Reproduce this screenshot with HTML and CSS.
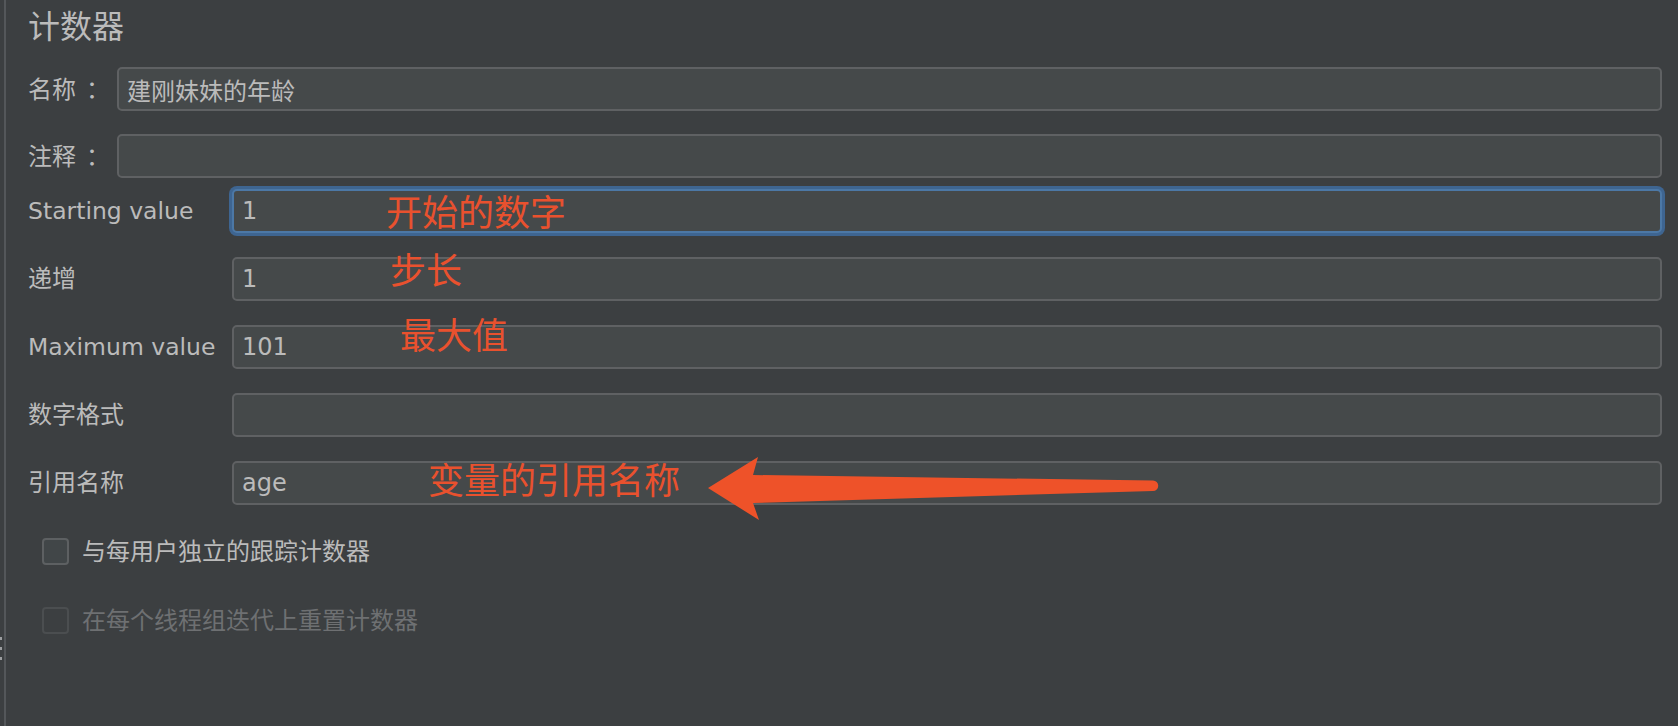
FILE: index.html
```html
<!DOCTYPE html>
<html lang="zh-CN">
<head>
<meta charset="utf-8">
<title>计数器</title>
<link rel="stylesheet" href="styles.css">
</head>
<body>
<div class="app">
  <div class="splitter">
    <span class="grip"></span>
    <span class="grip"></span>
    <span class="grip"></span>
  </div>
  <main class="panel">
    <h1 class="title">计数器</h1>

    <div class="form form-name">
      <label class="label">名称<span class="colon">：</span></label>
      <input class="field" type="text" value="建刚妹妹的年龄">
      <label class="label">注释<span class="colon">：</span></label>
      <input class="field" type="text" value="">
    </div>

    <div class="form form-counter">
      <label class="label latin">Starting value</label>
      <input class="field focused" type="text" value="1">
      <label class="label">递增</label>
      <input class="field" type="text" value="1">
      <label class="label latin">Maximum value</label>
      <input class="field" type="text" value="101">
      <label class="label">数字格式</label>
      <input class="field" type="text" value="">
      <label class="label">引用名称</label>
      <input class="field" type="text" value="age">
    </div>

    <div class="checks">
      <label class="check"><input class="box" type="checkbox"><span>与每用户独立的跟踪计数器</span></label>
      <label class="check disabled"><input class="box" type="checkbox" disabled><span>在每个线程组迭代上重置计数器</span></label>
    </div>
  </main>
</div>

<div class="annotations">
  <span class="note note-start">开始的数字</span>
  <span class="note note-step">步长</span>
  <span class="note note-max">最大值</span>
  <span class="note note-ref">变量的引用名称</span>
  <svg class="arrow" width="1678" height="726" viewBox="0 0 1678 726">
    <path d="M708 488 L758 457 L753 475 L1153 480.5 A5.25 5.25 0 0 1 1153 491 L753 503 L759 520 Z" fill="#ee5229"/>
  </svg>
</div>
</body>
</html>
```

FILE: styles.css
```css
html, body {
  margin: 0;
  padding: 0;
}

body {
  width: 1678px;
  height: 726px;
  overflow: hidden;
  background: #3c3f41;
  color: #bbbbbb;
  font-family: "DejaVu Sans", "Noto Sans CJK SC", sans-serif;
  font-size: 24px;
  position: relative;
}

.app {
  display: flex;
  height: 726px;
}

.splitter {
  width: 6px;
  flex: none;
  border-right: 2px solid #54575a;
  display: flex;
  flex-direction: column;
  gap: 7px;
  padding-top: 637px;
  box-sizing: border-box;
}

.grip {
  display: block;
  width: 2px;
  height: 3px;
  background: #9c9ea0;
}

.panel {
  flex: 1;
  padding: 7px 16px 0 22px;
  display: flex;
  flex-direction: column;
}

.title {
  margin: 0;
  font-size: 32px;
  line-height: 40px;
  font-weight: normal;
  color: #bbbbbb;
}

.form {
  display: grid;
  align-items: center;
}

.form-name {
  grid-template-columns: 89px 1fr;
  row-gap: 23px;
  margin-top: 20px;
}

.form-counter {
  grid-template-columns: 204px 1fr;
  row-gap: 24px;
  margin-top: 11px;
}

.label {
  line-height: 30px;
  white-space: nowrap;
}

.latin {
  font-size: 23.5px;
}

.colon {
  font-family: "Noto Sans CJK TC", sans-serif;
  margin-left: 10px;
}

.field {
  box-sizing: border-box;
  height: 44px;
  margin: 0;
  padding: 0 8px;
  background: #45494a;
  border: 2px solid #5f6163;
  border-radius: 5px;
  color: #bbbbbb;
  font-family: "DejaVu Sans", "Noto Sans CJK SC", sans-serif;
  font-size: 24px;
  outline: none;
}

.field.focused {
  border-color: #4c78a6;
  box-shadow: 0 0 0 3px #3e6591;
}

.checks {
  display: flex;
  flex-direction: column;
  gap: 42px;
  margin-top: 33px;
  padding-left: 14px;
}

.check {
  display: flex;
  align-items: center;
  gap: 13px;
  height: 27px;
  line-height: 30px;
}

.box {
  appearance: none;
  -webkit-appearance: none;
  box-sizing: border-box;
  width: 27px;
  height: 27px;
  margin: 0;
  border: 2px solid #5d6062;
  border-radius: 4px;
  background: #414648;
}

.check.disabled {
  color: #6e7072;
}

.check.disabled .box {
  border-color: #4b4e50;
  background: #3c3f41;
}

.annotations {
  position: absolute;
  left: 0;
  top: 0;
  width: 1678px;
  height: 726px;
  pointer-events: none;
}

.note {
  position: absolute;
  font-family: "Noto Sans CJK SC", sans-serif;
  font-size: 36px;
  line-height: 36px;
  color: #e9512e;
  white-space: nowrap;
}

.note-start { left: 386px; top: 192px; }
.note-step  { left: 390px; top: 250px; }
.note-max   { left: 400px; top: 315px; }
.note-ref   { left: 428px; top: 460px; }

.arrow {
  position: absolute;
  left: 0;
  top: 0;
}
```
